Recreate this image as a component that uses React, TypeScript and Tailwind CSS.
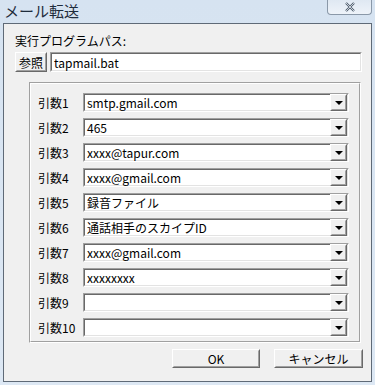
import React from 'react';

const args = [
  "smtp.gmail.com",
  "465",
  "xxxx@tapur.com",
  "xxxx@gmail.com",
  "録音ファイル",
  "通話相手のスカイプID",
  "xxxx@gmail.com",
  "xxxxxxxx",
  "",
  "",
];

const font = { fontFamily: '"MS UI Gothic", "Noto Sans CJK JP", sans-serif' };

function Sunken({ className, children }: { className: string; children?: React.ReactNode }) {
  return (
    <div className={`border border-t-[#a0a0a0] border-l-[#a0a0a0] border-b-white border-r-white ${className}`}>
      <div className="h-full w-full border border-t-[#696969] border-l-[#696969] border-b-[#e3e3e3] border-r-[#e3e3e3] bg-white flex items-center">
        {children}
      </div>
    </div>
  );
}

function Raised({ className, children }: { className: string; children?: React.ReactNode }) {
  return (
    <div className={`border border-t-white border-l-white border-b-[#696969] border-r-[#696969] bg-[#f0f0f0] ${className}`}>
      <div className="h-full w-full border border-t-[#f0f0f0] border-l-[#f0f0f0] border-b-[#a0a0a0] border-r-[#a0a0a0] flex items-center justify-center">
        {children}
      </div>
    </div>
  );
}

function Combo({ value }: { value: string }) {
  return (
    <Sunken className="w-[266px] h-[19px]">
      <span className="flex-1 pl-[2px] text-[12px] leading-[15px] text-black whitespace-nowrap">{value}</span>
      <Raised className="w-[17px] h-[17px] shrink-0">
        <div className="w-0 h-0 border-l-[4px] border-r-[4px] border-t-[4px] border-l-transparent border-r-transparent border-t-black" />
      </Raised>
    </Sunken>
  );
}

export default function App() {
  return (
    <div className="w-[375px] h-[385px] bg-gradient-to-b from-[#d6e3f1] to-[#dde8f4] flex flex-col overflow-hidden" style={font}>
      {/* title bar */}
      <div className="h-[23px] flex justify-between items-start shrink-0">
        <span className="pl-[4px] pt-[2px] text-[15px] leading-[18px] text-[#1e2b3b]" style={{ fontFamily: '"Noto Sans CJK JP", sans-serif' }}>メール転送</span>
        <div className="mr-[3px] w-[45px] h-[15px] border border-t-0 border-[#8a98a8] rounded-b-[4px] bg-gradient-to-b from-[#dfe8f2] to-[#eef3f9] flex items-center justify-center">
          <svg width="12" height="10" viewBox="0 0 12 10">
            <path d="M2 1 L10 9 M10 1 L2 9" stroke="#4d5a6a" strokeWidth="2.2" fill="none" />
            <path d="M2 1 L10 9 M10 1 L2 9" stroke="#e8eef5" strokeWidth="0.8" fill="none" />
          </svg>
        </div>
      </div>

      {/* client */}
      <div className="mx-[3px] h-[359px] border border-[#5f6a77] bg-[#f0f0f0] flex flex-col">
        <div className="pl-[11px] pt-[9px] text-[12px] leading-[16px] text-black">実行プログラムパス:</div>
        <div className="pl-[11px] mt-[3px] flex gap-[3px]">
          <Raised className="w-[32px] h-[20px]">
            <span className="text-[12px] leading-[15px]">参照</span>
          </Raised>
          <Sunken className="w-[312px] h-[20px]">
            <span className="pl-[2px] text-[12px] leading-[15px]">tapmail.bat</span>
          </Sunken>
        </div>

        {/* group box */}
        <div className="ml-[25px] mt-[10px] w-[332px] h-[261px] border border-t-[#a0a0a0] border-l-[#a0a0a0] border-b-white border-r-white">
          <div className="h-full w-full border border-t-white border-l-white border-b-[#a0a0a0] border-r-[#a0a0a0] pt-[9px] pl-[7px] flex flex-col gap-[6px]">
            {args.map((v, i) => (
              <div key={i} className="flex items-center">
                <span className="w-[45px] text-[12px] leading-[15px] text-black">引数{i + 1}</span>
                <Combo value={v} />
              </div>
            ))}
          </div>
        </div>

        <div className="mt-[6px] ml-[168px] flex gap-[14px]">
          <Raised className="w-[88px] h-[19px]">
            <span className="text-[12px] leading-[15px]">OK</span>
          </Raised>
          <Raised className="w-[89px] h-[19px]">
            <span className="text-[12px] leading-[15px]">キャンセル</span>
          </Raised>
        </div>
      </div>
    </div>
  );
}
